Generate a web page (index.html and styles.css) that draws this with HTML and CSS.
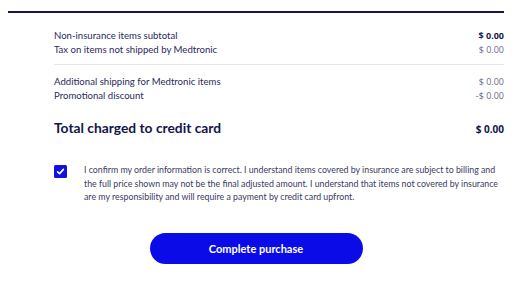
FILE: index.html
```html
<!DOCTYPE html>
<html>
<head>
<meta charset="utf-8">
<link rel="stylesheet" href="styles.css">
</head>
<body>
<div class="summary">
  <div class="group">
    <div class="row"><span class="label">Non-insurance items subtotal</span><span class="amt strong">$ 0.00</span></div>
    <div class="row"><span class="label">Tax on items not shipped by Medtronic</span><span class="amt">$ 0.00</span></div>
  </div>
  <div class="group second">
    <div class="row"><span class="label">Additional shipping for Medtronic items</span><span class="amt">$ 0.00</span></div>
    <div class="row"><span class="label">Promotional discount</span><span class="amt">-$ 0.00</span></div>
  </div>
  <div class="total"><span class="total-label">Total charged to credit card</span><span class="total-amt">$ 0.00</span></div>
  <label class="confirm">
    <span class="box"><svg viewBox="0 0 13 13" width="13" height="13"><path d="M3.6 6.8 L5.6 8.6 L9.4 4.4" fill="none" stroke="#fff" stroke-width="1.6" stroke-linecap="round" stroke-linejoin="round"/></svg></span>
    <span class="confirm-text">I confirm my order information is correct. I understand items covered by insurance are subject to billing and the full price shown may not be the final adjusted amount. I understand that items not covered by insurance are my responsibility and will require a payment by credit card upfront.</span>
  </label>
  <div class="actions"><button class="purchase">Complete purchase</button></div>
</div>
</body>
</html>
```
FILE: styles.css
```css
html, body { margin: 0; padding: 0; background: #fff; }
body { font-family: Lato, "Noto Sans", sans-serif; color: #1b1b4d; }
.summary {
  margin: 11px 22px 0 8px;
  border-top: 2px solid #16164a;
  padding: 16px 0 0 46px;
}
.group { display: flex; flex-direction: column; padding-bottom: 8px; border-bottom: 1px solid #e4e4e8; }
.group.second { border-bottom: none; padding-top: 10px; padding-bottom: 0; }
.row { display: flex; justify-content: space-between; align-items: baseline; height: 13.5px; line-height: 13.5px; }
.label { font-size: 9.6px; color: #2a2a5c; }
.amt { font-family: "Open Sans", "Noto Sans", sans-serif; font-size: 9px; color: #6a6a88; }
.amt.strong { font-weight: 700; color: #16164a; }
.total { display: flex; justify-content: space-between; align-items: baseline; margin-top: 17px; }
.total-label { font-size: 13.8px; font-weight: 700; color: #14144a; }
.total-amt { font-family: "Open Sans", "Noto Sans", sans-serif; font-size: 10px; font-weight: 700; color: #14144a; }
.confirm { display: flex; gap: 17px; margin-top: 27px; align-items: flex-start; }
.box { flex: none; width: 13px; height: 13px; background: #1010e0; border-radius: 1.5px; margin-top: 2px; display: flex; }
.confirm-text { font-size: 8.8px; line-height: 13.5px; color: #3a3a62; padding-right: 4px; }
.actions { display: flex; justify-content: center; margin-top: 29px; }
.purchase {
  width: 213px; height: 31px; border: none; border-radius: 16px;
  background: #0b0be8; color: #fff; font-family: Lato, sans-serif; font-weight: 700; font-size: 11px;
  margin-left: -46px;
}
```
